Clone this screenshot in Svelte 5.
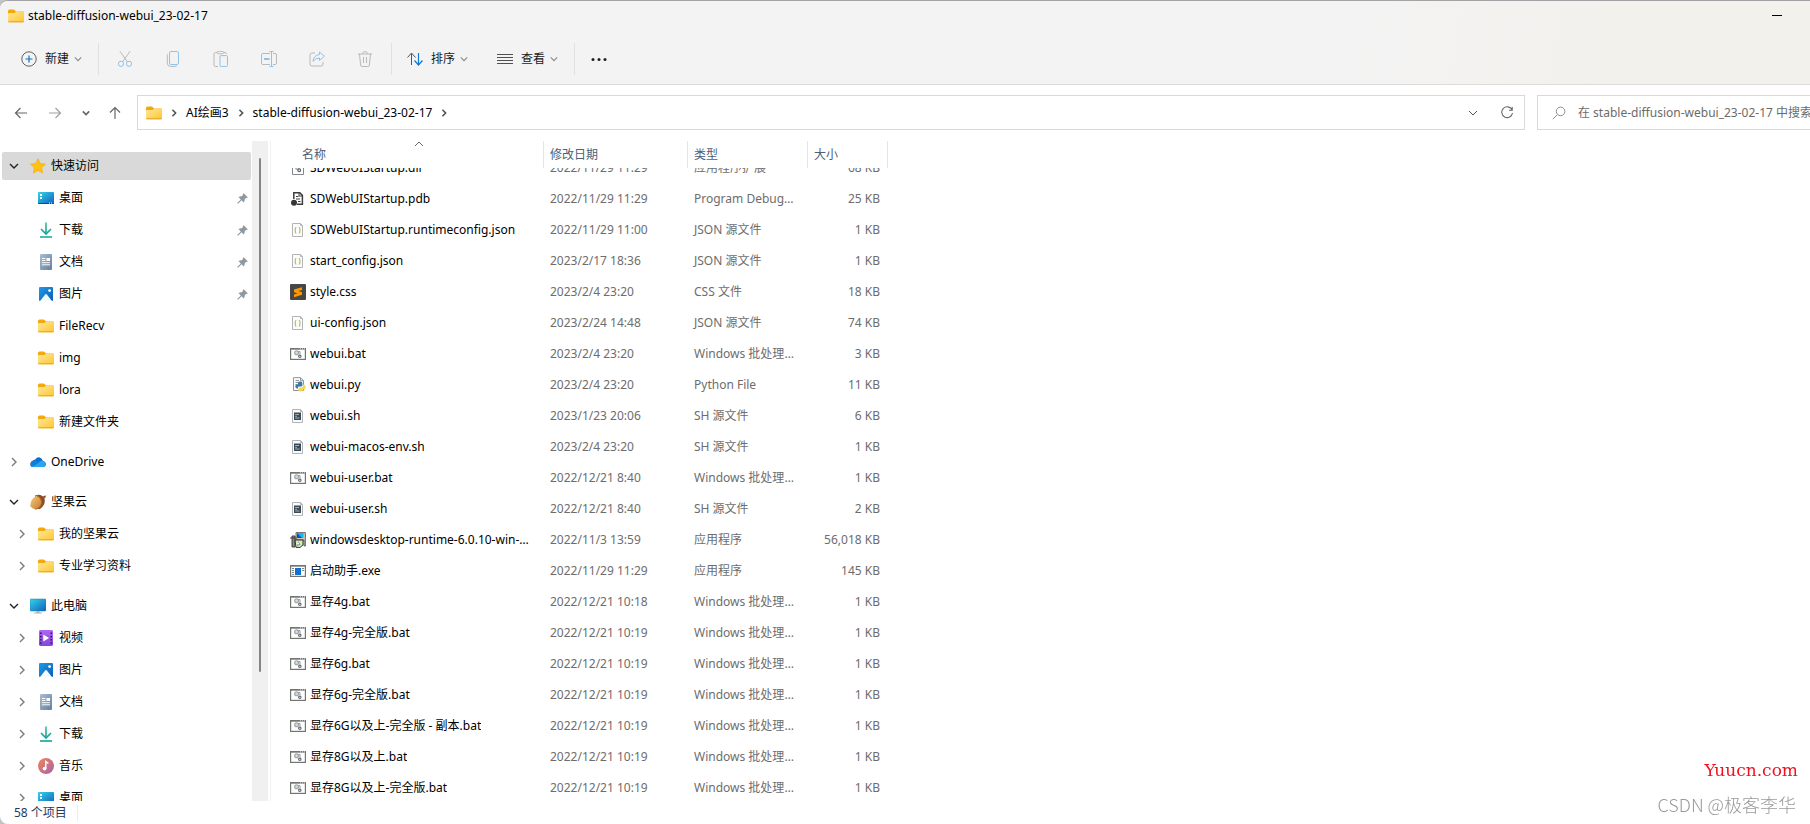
<script>
  const BAT = 'Windows 批处理文件';
  const files = [
    ['dll', 'SDWebUIStartup.dll', '2022/11/29 11:29', '应用程序扩展', '68 KB'],
    ['pdb', 'SDWebUIStartup.pdb', '2022/11/29 11:29', 'Program Debug Database', '25 KB'],
    ['json', 'SDWebUIStartup.runtimeconfig.json', '2022/11/29 11:00', 'JSON 源文件', '1 KB'],
    ['json', 'start_config.json', '2023/2/17 18:36', 'JSON 源文件', '1 KB'],
    ['css', 'style.css', '2023/2/4 23:20', 'CSS 文件', '18 KB'],
    ['json', 'ui-config.json', '2023/2/24 14:48', 'JSON 源文件', '74 KB'],
    ['bat', 'webui.bat', '2023/2/4 23:20', BAT, '3 KB'],
    ['py', 'webui.py', '2023/2/4 23:20', 'Python File', '11 KB'],
    ['sh', 'webui.sh', '2023/1/23 20:06', 'SH 源文件', '6 KB'],
    ['sh', 'webui-macos-env.sh', '2023/2/4 23:20', 'SH 源文件', '1 KB'],
    ['bat', 'webui-user.bat', '2022/12/21 8:40', BAT, '1 KB'],
    ['sh', 'webui-user.sh', '2022/12/21 8:40', 'SH 源文件', '2 KB'],
    ['setup', 'windowsdesktop-runtime-6.0.10-win-x64.exe', '2022/11/3 13:59', '应用程序', '56,018 KB'],
    ['exe', '启动助手.exe', '2022/11/29 11:29', '应用程序', '145 KB'],
    ['bat', '显存4g.bat', '2022/12/21 10:18', BAT, '1 KB'],
    ['bat', '显存4g-完全版.bat', '2022/12/21 10:19', BAT, '1 KB'],
    ['bat', '显存6g.bat', '2022/12/21 10:19', BAT, '1 KB'],
    ['bat', '显存6g-完全版.bat', '2022/12/21 10:19', BAT, '1 KB'],
    ['bat', '显存6G以及上-完全版 - 副本.bat', '2022/12/21 10:19', BAT, '1 KB'],
    ['bat', '显存8G以及上.bat', '2022/12/21 10:19', BAT, '1 KB'],
    ['bat', '显存8G以及上-完全版.bat', '2022/12/21 10:19', BAT, '1 KB']
  ];
  const groups = [
    { icon: 'star', name: '快速访问', open: true, selected: true, items: [
      { icon: 'desktop', name: '桌面', pin: true },
      { icon: 'download', name: '下载', pin: true },
      { icon: 'doc', name: '文档', pin: true },
      { icon: 'picture', name: '图片', pin: true },
      { icon: 'folder', name: 'FileRecv' },
      { icon: 'folder', name: 'img' },
      { icon: 'folder', name: 'lora' },
      { icon: 'folder', name: '新建文件夹' }
    ] },
    { icon: 'cloud', name: 'OneDrive', open: false, items: [] },
    { icon: 'nut', name: '坚果云', open: true, items: [
      { icon: 'folder', name: '我的坚果云', more: true },
      { icon: 'folder', name: '专业学习资料', more: true }
    ] },
    { icon: 'pc', name: '此电脑', open: true, items: [
      { icon: 'video', name: '视频', more: true },
      { icon: 'picture', name: '图片', more: true },
      { icon: 'doc', name: '文档', more: true },
      { icon: 'download', name: '下载', more: true },
      { icon: 'music', name: '音乐', more: true },
      { icon: 'desktop', name: '桌面', more: true }
    ] }
  ];
  const tools = [
    ['cut', '剪切'], ['copy', '复制'], ['paste', '粘贴'],
    ['rename', '重命名'], ['share', '共享'], ['trash', '删除']
  ];

  // The list opens part-way through its first row, under the sticky header.
  function startScrolled(node) {
    node.scrollTop = 16;
  }
</script>

<svg class="defs" width="0" height="0" aria-hidden="true">
  <defs>
    <linearGradient id="gFolder" x1="0" y1="0" x2="1" y2="1"><stop offset="0" stop-color="#ffe79a" /><stop offset="1" stop-color="#fcc62f" /></linearGradient>
    <linearGradient id="gDesk" x1="0" y1="0" x2="1" y2="1"><stop offset="0" stop-color="#33d3e8" /><stop offset="1" stop-color="#0f62bd" /></linearGradient>
    <linearGradient id="gDown" x1="0" y1="0" x2="0" y2="1"><stop offset="0" stop-color="#35c089" /><stop offset="1" stop-color="#12a09a" /></linearGradient>
    <linearGradient id="gDoc" x1="0" y1="0" x2="1" y2="1"><stop offset="0" stop-color="#a9bed2" /><stop offset="1" stop-color="#64809f" /></linearGradient>
    <linearGradient id="gPic" x1="0" y1="0" x2="1" y2="1"><stop offset="0" stop-color="#1f9be6" /><stop offset="1" stop-color="#0a5cb8" /></linearGradient>
    <linearGradient id="gVideo" x1="0" y1="0" x2="0" y2="1"><stop offset="0" stop-color="#ae68f0" /><stop offset="1" stop-color="#8444dc" /></linearGradient>
    <linearGradient id="gMusic" x1="0" y1="0" x2="1" y2="1"><stop offset="0" stop-color="#f0865a" /><stop offset="1" stop-color="#a862a6" /></linearGradient>
    <linearGradient id="gNut" x1="0" y1="0" x2="1" y2="1"><stop offset="0" stop-color="#f5cc7c" /><stop offset="1" stop-color="#c77a30" /></linearGradient>
  </defs>
</svg>

{#snippet icon(name)}
  <svg class="icon" viewBox="0 0 16 16" width="16" height="16" fill="none" aria-hidden="true">
    {#if name === 'folder'}
      <path d="M0 3.2Q0 1.5 1.5 1.5H6L8 3.6H14.8Q16 3.6 16 5V9H0z" fill="#f2a90d" />
      <path d="M0 6.2Q0 5 1.2 5H6.4L8.2 3.8H14.8Q16 3.8 16 5V13Q16 14.2 14.8 14.2H1.2Q0 14.2 0 13z" fill="url(#gFolder)" />
      <path d="M.4 13.8H15.6" stroke="#e5a21c" />
    {:else if name === 'star'}
      <path d="M8 .8L10.2 5.6 15.4 6.2 11.5 9.7 12.6 14.9 8 12.3 3.4 14.9 4.5 9.7.6 6.2 5.8 5.6z" fill="#ffc30f" stroke="#f8ad0c" stroke-width=".8" stroke-linejoin="round" />
    {:else if name === 'desktop'}
      <rect y="2" width="16" height="12" rx="1" fill="url(#gDesk)" />
      <path d="M0 13H16V13.2Q16 14 15 14H1Q0 14 0 13.2z" fill="#0b4d86" />
      <path d="M2 4H4V6H2zM2 7H4V9H2zM11 12.5H12V13.5H11zM13 12.5H14V13.5H13z" fill="#fff" />
    {:else if name === 'download'}
      <path d="M3 7L8 12 13 7" stroke="#1fab93" stroke-width="1.7" />
      <path d="M2 14.2H14V15.8H2z" fill="#16a397" />
      <path d="M7.2.5H8.8V11.5H7.2z" fill="url(#gDown)" />
    {:else if name === 'doc'}
      <rect x="2" width="12" height="16" rx="1" fill="url(#gDoc)" />
      <path d="M4 4.5H7.5M4 6.5H7.5M4 8.7H12M4 10.8H12" stroke="#fff" />
      <path d="M8.5 4H12V7H8.5z" fill="#fff" />
    {:else if name === 'picture'}
      <rect x="1" y="1" width="14" height="14" rx="1" fill="url(#gPic)" />
      <path d="M2 15L7.2 8.4Q8 7.6 8.8 8.4L14 15z" fill="#f4fbff" />
      <circle cx="11.6" cy="4.6" r="1.4" fill="#fff" />
    {:else if name === 'cloud'}
      <path d="M1 12.5Q-.8 9.5 1.7 7.4 4 5.8 5.2 5.6 7 2.8 9.8 3.5 12.3 4.2 12.7 6.7 15.8 7.5 16 10 15.7 12.7 13.5 13H3Q1.7 13 1 12.5z" fill="#0b6fce" />
      <path d="M1 12L9.5 7.5Q12.5 5.9 14.8 8 16.5 10 15.6 11.8 14.8 13 13 13H3Q1.6 12.9 1 12z" fill="#2aa5ee" />
      <path d="M1.2 7.8Q4.5 4.8 9.8 8.2L3 12.6Q-.6 11.6 1.2 7.8z" fill="#1280d8" />
    {:else if name === 'nut'}
      <path d="M5 1.6Q10-.7 13 2.6L15.5 1.2 15.8 3.2 14.4 4Q16 10 11 14.2 8 16 5.5 14z" fill="#8c4d22" />
      <path d="M6.5 1.6Q12 4 11.4 9.6 10 14.6 5.2 15.2 2 14.8.4 12.3-.5 6.4 6.5 1.6z" fill="url(#gNut)" />
      <path d="M6.5 1.6Q12 4 11.4 9.6 10 14.6 5.2 15.2" stroke="#b66b2c" />
    {:else if name === 'pc'}
      <rect y="1" width="16" height="12" rx="1" fill="url(#gDesk)" stroke="#1a7fae" stroke-width=".5" />
      <path d="M6.5 13H9.5V14.5H12V15.6H4V14.5H6.5z" fill="#a8b4bd" />
    {:else if name === 'video'}
      <rect x="1" width="14" height="16" rx="1.4" fill="url(#gVideo)" />
      <path d="M2 2.5H3.6V4.1H2zM2 5.8H3.6V7.4H2zM2 9H3.6V10.6H2zM2 12.2H3.6V13.8H2zM12.4 2.5H14V4.1H12.4zM12.4 5.8H14V7.4H12.4zM12.4 9H14V10.6H12.4zM12.4 12.2H14V13.8H12.4z" fill="#3a1976" />
      <path d="M5.3 4.4L11 8 5.3 11.6z" fill="#fff" />
    {:else if name === 'music'}
      <circle cx="8" cy="8" r="8" fill="url(#gMusic)" />
      <circle cx="6.6" cy="10.6" r="1.9" fill="#fff" />
      <path d="M7.8 10.6V3.4L10.4 5.5" stroke="#fff" stroke-width="1.4" />
    {:else if name === 'bat'}
      <rect x=".6" y="2.6" width="14.8" height="10.8" fill="#fff" stroke="#74756f" stroke-width="1.2" />
      <path d="M0 2H16V3.6H0z" fill="#74756f" />
      <path d="M10 2.4H11V3.2H10zM12 2.4H13V3.2H12zM14 2.4H15V3.2H14z" fill="#fff" />
      <circle cx="6.6" cy="6.8" r="1.9" fill="#d9dee0" stroke="#a2abae" stroke-width="1.3" />
      <circle cx="9.8" cy="10.3" r="1.2" fill="#fff" stroke="#626b72" stroke-width="1.2" />
      <path d="M8.2 5.6H10V8.6" stroke="#8e979b" />
    {:else if name === 'dll'}
      <path d="M2.5 1H11L13.5 3.5V14.5H2.5z" fill="#fff" stroke="#85878a" />
      <circle cx="7.4" cy="7.6" r="1.8" stroke="#8c969c" stroke-width="1.2" />
      <circle cx="9.2" cy="10.2" r="1.4" stroke="#5f6b73" stroke-width="1.2" />
    {:else if name === 'pdb'}
      <path d="M3.8 8V1.8H9.8L12.4 4.4V13.2H7" fill="#fff" stroke="#3d3d3d" stroke-width="1.5" />
      <path d="M6 5.5H8.5M6 8H10M8 10.5H10.5M9 2V5H12" stroke="#3d3d3d" />
      <circle cx="4" cy="11.8" r="3" fill="#373737" />
    {:else if name === 'json'}
      <path d="M2.5 1.5H10.5L12.5 3.5V14.5H2.5z" fill="#fcfcfc" stroke="#b2b5b8" />
      <path d="M10.5 1.5V3.5H12.5" stroke="#b2b5b8" />
      <path d="M6.4 5.5Q5 5.3 5.5 7.2L5 8.3 5.5 9.4Q5 11.3 6.4 11M8.8 5.5Q10.2 5.3 9.7 7.2L10.2 8.3 9.7 9.4Q10.2 11.3 8.8 11" stroke="#b8bd51" stroke-width="1.1" />
    {:else if name === 'sh'}
      <path d="M2.5 1.5H10.5L12.5 3.5V14.5H2.5z" fill="#fcfcfc" stroke="#b2b5b8" />
      <path d="M10.5 1.5V3.5H12.5" stroke="#b2b5b8" />
      <rect x="4" y="4.5" width="7" height="7.5" fill="#3c4b55" />
      <path d="M5.2 6.5H9M5.2 8.3H7M5.2 10H9.5" stroke="#c0cbd0" stroke-width=".8" />
    {:else if name === 'css'}
      <rect width="16" height="16" rx="1" fill="#464646" />
      <path d="M4 5.6L12 3.2V6L8.4 7.1 12 8.2V10.8L4 13.2V10.4L7.6 9.3 4 8.2z" fill="#ff9800" />
    {:else if name === 'py'}
      <path d="M3.5.7H10.5L13.5 3.7V13.5H3.5z" fill="#fff" stroke="#8e9499" />
      <path d="M10.5.7V3.7H13.5M5.5 3.5H9M5.5 5.5H9M5.5 7.5H7M5.5 9.5H6" stroke="#8e9499" />
      <path d="M8 6Q8 4.6 10 4.6 12.4 4.6 12.4 6V8.5Q12.4 9.6 11 9.6H8.8Q7.8 9.8 7.8 11.5H6.8Q5.4 11 5.4 9.2 5.4 7.4 7.2 7.2H8z" fill="#3878ad" />
      <path d="M13 7.6H14Q15.6 8 15.6 10.4 15.6 12.3 14.2 12.4H12.6V13.6Q12.6 14.6 10.6 14.6 8.4 14.4 8.4 13.2V11.4Q8.4 10.4 9.8 10.4H11.8Q13 10.2 13 9z" fill="#fbd448" />
    {:else if name === 'exe'}
      <rect x=".6" y="2.6" width="14.8" height="10.8" fill="#fff" stroke="#74756f" stroke-width="1.2" />
      <path d="M0 2H16V3.6H0z" fill="#74756f" />
      <rect x="5" y="5" width="6" height="7" fill="#0f72cd" />
      <path d="M2 5.5H4M2 7.5H4M2 9.5H4M2 11.5H4M12 5.5H14M12 7.5H14" stroke="#7a8790" />
    {:else if name === 'setup'}
      <path d="M6 .6H15.4V14H14V8H6z" fill="#c9c9bd" stroke="#4c4c4c" stroke-width=".8" />
      <rect x="7" y="1" width="6.5" height="5" fill="#12b7ef" />
      <path d="M7 1L12 6H7z" fill="#1247cf" />
      <path d="M2 4H5V15H2zM0 6H6.5" fill="#8b8b8b" stroke="#333" stroke-width=".9" />
      <path d="M5 8H13V13L10 15.4H6z" fill="#e9e5ae" stroke="#222" stroke-width=".9" />
      <path d="M8 9L10.5 12.5 7 14z" fill="#2faeb3" />
      <circle cx="8" cy="11.5" r="1" fill="#fff" />
    {/if}
  </svg>
{/snippet}

{#snippet chevron(dir, size = 10)}
  <svg class="chev {dir}" viewBox="0 0 10 10" width={size} height={size} fill="none" stroke="currentColor" aria-hidden="true">
    {#if dir === 'right'}<path d="M3 1L7 5 3 9" />{:else}<path d="M1 3L5 7 9 3" />{/if}
  </svg>
{/snippet}

{#snippet tool(name)}
  <svg viewBox="0 0 16 16" width="16" height="16" fill="none" stroke="#b9b9b9" aria-hidden="true">
    {#if name === 'cut'}
      <path d="M3 .3L10.5 11M13 .3L5.5 11" />
      <circle cx="4" cy="12.8" r="2.6" stroke="#8fc3ea" /><circle cx="12" cy="12.8" r="2.6" stroke="#8fc3ea" />
    {:else if name === 'copy'}
      <path d="M2.5 3Q2.3 3.5 2.3 4.5V12Q2.3 15.4 5.5 15.4H10Q11.4 15.4 12 14.6" />
      <rect x="4.5" y=".5" width="9" height="13" rx="1.6" stroke="#8fc3ea" />
    {:else if name === 'paste'}
      <path d="M4 1.5H2.5Q1 1.5 1 3V14Q1 15.5 2.5 15.5H5M10.5 1.5H12Q13.4 1.5 13.4 3" />
      <rect x="4" y=".4" width="6.6" height="2.4" rx="1.2" />
      <rect x="7" y="4.6" width="7.5" height="11" rx="1.2" stroke="#8fc3ea" />
    {:else if name === 'rename'}
      <path d="M9 2.5H2Q.5 2.5.5 4V12Q.5 13.5 2 13.5H9M12 2.5H14Q15.5 2.5 15.5 4V12Q15.5 13.5 14 13.5H12" />
      <path d="M10.5.5V15.5M8.5.5H12.5M8.5 15.5H12.5" stroke="#8fc3ea" />
      <path d="M3 8H8.5" stroke="#8fc3ea" stroke-width="1.8" />
    {:else if name === 'share'}
      <path d="M6 2H3Q1 2 1 4V13Q1 15 3 15H12Q14 15 14 13V11" />
      <path d="M10.5 1L15.4 5.2 10.5 9.4V7Q6.5 6.8 4 10.4 4.6 4.2 10.5 3.5z" stroke="#8fc3ea" stroke-linejoin="round" />
    {:else}
      <path d="M.8 3H15.2M5.5 2.8Q5.6.6 8 .6 10.4.6 10.5 2.8M2.5 3L3.6 14Q3.8 15.5 5.2 15.5H10.8Q12.2 15.5 12.4 14L13.5 3M6.5 6V12M9.5 6V12" />
    {/if}
  </svg>
{/snippet}

<div class="window">
  <header>
    <div class="title">
      {@render icon('folder')}
      <h1>stable-diffusion-webui_23-02-17</h1>
      <button class="minimize" aria-label="最小化"><svg viewBox="0 0 10 10" width="10" height="10" aria-hidden="true"><path d="M0 4.5H10" stroke="#000" /></svg></button>
    </div>
    <div class="toolbar">
      <button class="labelled">
        <svg viewBox="0 0 16 16" width="16" height="16" fill="none" aria-hidden="true"><circle cx="8" cy="8" r="7.2" stroke="#606060" /><path d="M8 4.5V11.5M4.5 8H11.5" stroke="#0f6fc6" stroke-width="1.2" /></svg>
        <span>新建</span>{@render chevron('down', 8)}
      </button>
      <div class="tools">
        {#each tools as [name, label]}
          <button class="tool" aria-label={label} disabled>{@render tool(name)}</button>
        {/each}
      </div>
      <button class="labelled">
        <svg viewBox="0 0 16 16" width="16" height="16" fill="none" aria-hidden="true"><path d="M4.5 14V2.5M.5 6.5L4.5 2 8.5 6.5" stroke="#555" /><path d="M11.5 2V13.5M7.5 9.5L11.5 14 15.5 9.5" stroke="#0f7ad6" stroke-width="1.2" /></svg>
        <span>排序</span>{@render chevron('down', 8)}
      </button>
      <button class="labelled">
        <svg viewBox="0 0 16 16" width="16" height="16" fill="none" stroke="#505050" aria-hidden="true"><path d="M0 3.5H16M0 6.5H16M0 9.5H16M0 12.5H16" /></svg>
        <span>查看</span>{@render chevron('down', 8)}
      </button>
      <div class="more">
        <button class="tool" aria-label="更多"><svg viewBox="0 0 16 16" width="16" height="16" fill="#202020" aria-hidden="true"><circle cx="2" cy="8.5" r="1.5" /><circle cx="8" cy="8.5" r="1.5" /><circle cx="14" cy="8.5" r="1.5" /></svg></button>
      </div>
    </div>
  </header>

  <nav class="location" aria-label="导航">
    <div class="arrows">
      <button aria-label="后退"><svg viewBox="0 0 14 14" width="14" height="14" fill="none" stroke="#666" stroke-width="1.2"><path d="M13 7H1.5M6.5 2L1.5 7 6.5 12" /></svg></button>
      <button aria-label="前进"><svg viewBox="0 0 14 14" width="14" height="14" fill="none" stroke="#a0a0a0" stroke-width="1.2"><path d="M1 7H12.5M7.5 2L12.5 7 7.5 12" /></svg></button>
      <button class="recent" aria-label="最近">{@render chevron('down', 8)}</button>
      <button aria-label="向上"><svg viewBox="0 0 14 14" width="14" height="14" fill="none" stroke="#666" stroke-width="1.2"><path d="M7 13V1.5M2 6.5L7 1.5 12 6.5" /></svg></button>
    </div>
    <div class="address">
      {@render icon('folder')}
      {@render chevron('right', 8)}
      <a href="#ai">AI绘画3</a>
      {@render chevron('right', 8)}
      <a href="#webui">stable-diffusion-webui_23-02-17</a>
      {@render chevron('right', 8)}
      <span class="spacer"></span>
      <button aria-label="历史记录">{@render chevron('down')}</button>
      <button aria-label="刷新"><svg viewBox="0 0 14 14" width="14" height="14" fill="none" stroke="#666" stroke-width="1.1"><path d="M12 3.8A5.4 5.4 0 1 0 12.5 7M12.2 1V4.2H9" /></svg></button>
    </div>
    <label class="search">
      <svg viewBox="0 0 14 14" width="14" height="14" fill="none" stroke="#909090" aria-hidden="true"><circle cx="8.6" cy="5.4" r="4.3" /><path d="M5.4 8.6L.8 13.2" /></svg>
      <input type="text" aria-label="搜索" placeholder="在 stable-diffusion-webui_23-02-17 中搜索" />
    </label>
  </nav>

  <div class="body">
    <aside>
      <div class="tree">
        {#each groups as group}
          <section>
            <a class="node" class:selected={group.selected} href="#top">
              <span class="toggle" class:open={group.open}>{@render chevron(group.open ? 'down' : 'right')}</span>
              {@render icon(group.icon)}
              <span>{group.name}</span>
            </a>
            {#each group.items as item}
              <a class="node child" href="#top">
                <span class="toggle">{#if item.more}{@render chevron('right')}{/if}</span>
                {@render icon(item.icon)}
                <span>{item.name}</span>
                {#if item.pin}
                  <svg class="pin" viewBox="0 0 11 11" width="11" height="11" fill="#8d98a1" aria-hidden="true"><path d="M6.6.2L10.8 4.2 10 5 9.2 4.8 7.6 6.6Q7.8 8.4 6.8 9.4L4.5 7.2 1 10.8.2 10 3.8 6.5 1.6 4.2Q2.8 3.2 4.4 3.4L6.2 1.8 5.8 1z" /></svg>
                {/if}
              </a>
            {/each}
          </section>
        {/each}
      </div>
      <div class="scrollbar"><div class="thumb"></div></div>
    </aside>

    <main use:startScrolled>
      <table>
        <thead>
          <tr>
            <th class="name">名称<svg class="sort" viewBox="0 0 10 6" width="10" height="6" fill="none" stroke="#666" aria-hidden="true"><path d="M1 5L5 1 9 5" /></svg></th>
            <th class="date">修改日期</th>
            <th class="type">类型</th>
            <th class="size">大小</th>
          </tr>
        </thead>
        <tbody>
          {#each files as [kind, name, date, type, size]}
            <tr>
              <td class="name"><div class="file">{@render icon(kind)}<span>{name}</span></div></td>
              <td>{date}</td>
              <td>{type}</td>
              <td class="size">{size}</td>
            </tr>
          {/each}
        </tbody>
      </table>
    </main>
  </div>

  <footer><span>58 个项目</span></footer>

  <div class="marks">
    <div class="site">Yuucn.com</div>
    <div class="author">CSDN @极客李华</div>
  </div>
</div>

<style>
  :global(body) {
    margin: 0;
    background: #c4c3c4;
  }
  .defs { position: absolute; }
  .window {
    position: relative;
    display: flex;
    flex-direction: column;
    height: 100vh;
    box-sizing: border-box;
    overflow: hidden;
    border-top: 1px solid #a3a1a3;
    border-radius: 8px 0 0 8px;
    background: #fff;
    color: #000;
    font: 12px/16px "Noto Sans", "Noto Sans CJK SC", sans-serif;
  }
  button {
    display: flex;
    align-items: center;
    border: 0;
    padding: 0;
    background: none;
    color: inherit;
    font: inherit;
  }
  a { color: inherit; text-decoration: none; }
  svg { display: block; flex: none; }

  header {
    background: linear-gradient(100deg, #f3f3f3 75%, #f3f1ec 90%);
    border-bottom: 1px solid #dcdbd9;
  }
  .title {
    display: flex;
    align-items: center;
    height: 29px;
    padding-left: 8px;
  }
  h1 {
    flex: 1;
    margin: 0 0 0 4px;
    font-size: 12px;
    font-weight: 400;
  }
  .minimize {
    justify-content: center;
    width: 46px;
    height: 28px;
    margin-right: 10px;
  }
  .toolbar {
    display: flex;
    align-items: center;
    box-sizing: border-box;
    height: 54px;
    padding: 3px 0 0 10px;
    color: #1a1a1a;
  }
  .labelled {
    gap: 8px;
    height: 32px;
    padding: 0 12px 0 11px;
  }
  .labelled .chev { margin-left: -3px; color: #8a8a8a; stroke-width: 1.4; }
  .tools, .more {
    display: flex;
    border-left: 1px solid #e1e1e1;
  }
  .tools {
    gap: 16px;
    margin-left: 4px;
    padding: 0 10px;
    border-right: 1px solid #e1e1e1;
  }
  .tool {
    justify-content: center;
    width: 32px;
    height: 32px;
  }
  .labelled + .labelled { margin-left: 6px; }
  .tools + .labelled { margin-left: 4px; }
  .more { margin-left: 4px; padding-left: 8px; }

  .location {
    display: flex;
    align-items: center;
    padding: 10px 0 11px;
  }
  .arrows {
    display: flex;
    align-items: center;
    gap: 20px;
    padding: 0 15px 0 14px;
  }
  .arrows .recent { color: #666; }
  .arrows .recent .chev { stroke-width: 2; }
  .arrows button:last-child { margin-left: -2px; }
  .address {
    display: flex;
    flex: 1;
    align-items: center;
    gap: 8px;
    height: 33px;
    padding: 0 10px 0 8px;
    border: 1px solid #d9d9d9;
  }
  .address .chev { color: #555; }
  .address .right { stroke-width: 2; }
  .spacer { flex: 1; }
  .address button { margin-left: 14px; }
  .search {
    display: flex;
    flex: 0 0 258px;
    align-items: center;
    gap: 12px;
    height: 33px;
    margin-left: 12px;
    padding-left: 14px;
    border: 1px solid #d9d9d9;
    border-right: 0;
  }
  input {
    flex: 1;
    min-width: 0;
    border: 0;
    padding: 0;
    outline: 0;
    background: none;
    font: inherit;
  }
  input::placeholder { color: #6b6b6b; opacity: 1; }

  .body {
    display: flex;
    flex: 1;
    min-height: 0;
  }
  aside {
    display: flex;
    width: 270px;
    flex: none;
    border-right: 1px solid #f2f2f2;
  }
  .tree {
    flex: 1;
    overflow: hidden;
    padding: 11px 1px 0 2px;
  }
  section { display: grid; row-gap: 4px; }
  section + section { margin-top: 12px; }
  .node {
    display: flex;
    align-items: center;
    gap: 5px;
    height: 28px;
    padding: 0 3px 0 7px;
    border-radius: 2px;
  }
  .node.child { padding-left: 15px; }
  .selected { background: #d9d9d9; }
  .toggle {
    width: 10px;
    margin-right: 6px;
    color: #7a7a7a;
  }
  .toggle.open { color: #222; }
  .toggle .chev { stroke-width: 1.4; }
  .pin { margin-left: auto; }
  .scrollbar {
    width: 16px;
    margin-right: 2px;
    padding-top: 17px;
    box-sizing: border-box;
    background: #f0f0f0;
  }
  .thumb {
    width: 2px;
    height: 80%;
    margin: 0 auto;
    border-radius: 1px;
    background: #858585;
  }

  main {
    flex: 1;
    overflow: auto;
    scrollbar-width: none;
  }
  table {
    table-layout: fixed;
    width: 617px;
    border-spacing: 0;
    color: #6d6d6d;
  }
  th {
    position: sticky;
    top: 0;
    height: 27px;
    box-sizing: border-box;
    padding: 0 6px;
    border-right: 1px solid #e5e5e5;
    background: #fff;
    color: #4c607a;
    font-weight: 400;
    text-align: left;
  }
  th.name { width: 273px; padding-left: 31px; }
  th.date { width: 144px; }
  th.type { width: 120px; }
  .sort {
    position: absolute;
    top: 0;
    left: 143px;
  }
  td {
    height: 31px;
    padding: 0 12px 0 6px;
    overflow: hidden;
    text-overflow: ellipsis;
    white-space: nowrap;
  }
  td.name { padding: 0 12px 0 19px; color: #000; }
  td.size { padding-right: 8px; text-align: right; }
  .file { display: flex; align-items: center; gap: 4px; }
  .file span { overflow: hidden; text-overflow: ellipsis; }

  footer {
    display: flex;
    align-items: center;
    height: 23px;
    padding-left: 14px;
    color: #243b5e;
  }
  footer span { padding-right: 10px; border-right: 1px solid #ececec; }

  .marks {
    position: absolute;
    right: 12px;
    bottom: 8px;
    text-align: right;
    white-space: nowrap;
  }
  .site {
    color: #f2101e;
    font: 17px/20px "DejaVu Serif", serif;
  }
  .author {
    margin: 12px 2px 0 0;
    color: #9a9a9a;
    font: 18px/24px "Noto Sans CJK SC", sans-serif;
    font-weight: 300;
  }
</style>
